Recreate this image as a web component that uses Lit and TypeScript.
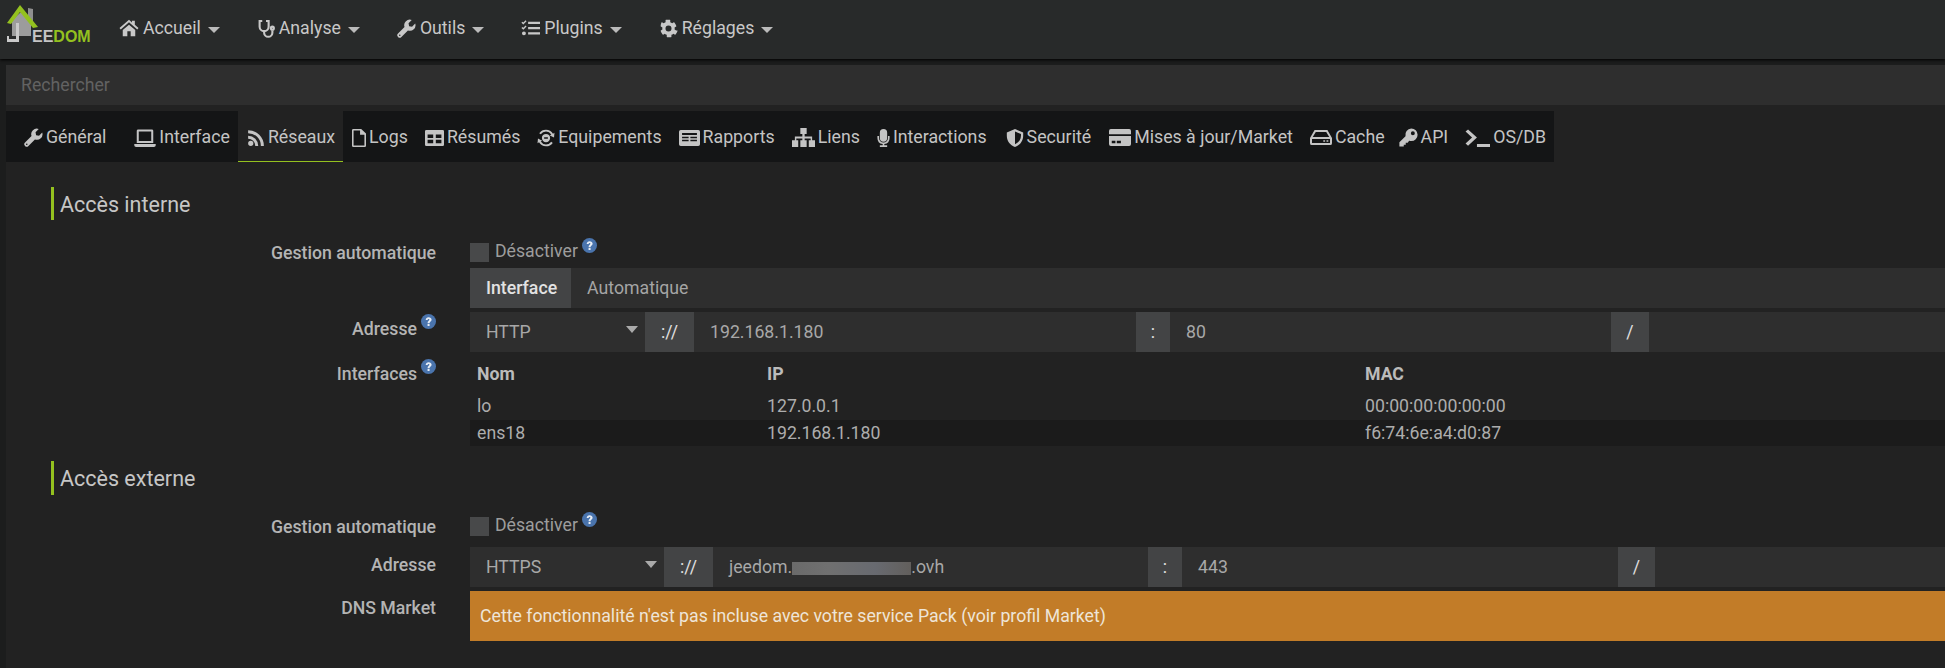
import { LitElement, html, css } from "lit";
import { customElement } from "lit/decorators.js";

const P = (vb: string, w: number, h: number, d: string) =>
  html`<svg class="i" style="width:${w}px;height:${h}px" viewBox=${vb} preserveAspectRatio="none" fill="currentColor" fill-rule="evenodd"><path d=${d}></path></svg>`;

const icons: Record<string, any> = {
  home: P("0 1 24 22", 20, 18, "M12 2 .6 12l1.500 1.700L12 5l9.900 8.700 1.500-1.700-4.400-3.900V3h-3.500v2.200zM4.500 14.500V22h5.500v-6h4v6h5.500v-7.500L12 8z"),
  steth: html`<svg class="i" style="width:18px;height:19px" viewBox="0 0 24 25" fill="none" stroke="currentColor" stroke-width="2.800"><path d="M7 2.500H3.500V10a6 6 0 0 0 12 0V2.500H12"></path><path d="M9.500 16v2a5.500 5.500 0 0 0 11 0v-3"></path><circle cx="20.500" cy="12" r="2"></circle></svg>`,
  wrench: P("0 0 24 24", 19, 19, "M23 5.700l-4 4-3.700-.7-.7-3.700 4-4a7 7 0 0 0-9.100 8.800L1.300 18.300a3 3 0 0 0 4.300 4.300l8.200-8.200a7 7 0 0 0 9.200-8.700zM3.500 21.500a1 1 0 1 1 0-2 1 1 0 0 1 0 2z"),
  tasks: P("0 0 24 24", 19, 18, "M9 3.500h15v3H9zM9 10.500h15v3H9zM9 17.500h15v3H9zM.5 5 1.800 3.700 2.900 4.800 5.800 1.800 7 3 3 7.200zM.5 12 1.800 10.700l1.100 1.100 2.900-3L7 10l-4 4.200zM3.700 16.500a2.500 2.500 0 1 1 0 5 2.500 2.500 0 0 1 0-5z"),
  cog: P("0 0 24 24", 19, 19, "M21.700 14.600l-2-1.200a8 8 0 0 0 0-2.800l2-1.200a.6.6 0 0 0 .2-.7 11.500 11.500 0 0 0-2.500-4.400.6.6 0 0 0-.7-.1l-2 1.200a8 8 0 0 0-2.500-1.400V1.600a.6.6 0 0 0-.4-.5 11.600 11.600 0 0 0-5.100 0 .6.6 0 0 0-.4.500V4a8 8 0 0 0-2.500 1.400l-2-1.200a.6.6 0 0 0-.7.100A11.500 11.500 0 0 0 2.100 8.700a.6.6 0 0 0 .2.7l2 1.200a8 8 0 0 0 0 2.800l-2 1.200a.6.6 0 0 0-.2.7 11.500 11.500 0 0 0 2.500 4.400.6.6 0 0 0 .7.1l2-1.200A8 8 0 0 0 9.800 20v2.400a.6.6 0 0 0 .4.500 11.600 11.600 0 0 0 5.100 0 .6.6 0 0 0 .4-.5V20a8 8 0 0 0 2.500-1.400l2 1.200a.6.6 0 0 0 .7-.1 11.500 11.500 0 0 0 2.500-4.400.6.6 0 0 0-.2-.7zM12 15.800a3.800 3.800 0 1 1 0-7.600 3.800 3.800 0 0 1 0 7.600z"),
  laptop: P("0 1 24 20", 22, 18, "M4.500 1.500h15A1.500 1.500 0 0 1 21 3v13.500H3V3a1.500 1.500 0 0 1 1.500-1.500zM5.200 3.700v10.600h13.600V3.700zM.3 17.800h23.400V19a2 2 0 0 1-2 2H2.300a2 2 0 0 1-2-2z"),
  rss: P("0 0 24 24", 18, 18, "M5 15.500a3.500 3.500 0 1 1 0 7 3.500 3.500 0 0 1 0-7zM1.500 9v4a9.500 9.500 0 0 1 9.500 9.500h4A13.500 13.500 0 0 0 1.500 9zM1.500 1.500v4a17 17 0 0 1 17 17h4a21 21 0 0 0-21-21z"),
  file: P("4 1 16 22", 14, 18, "M5.500 1h9L20 6.500v15a1.500 1.500 0 0 1-1.500 1.500h-13A1.500 1.500 0 0 1 4 21.500v-19A1.500 1.500 0 0 1 5.500 1zM5.800 2.800v18.400h12.400V8h-5V2.800z"),
  cells: P("1 3 22 18", 19, 16, "M2.500 3h19A1.500 1.500 0 0 1 23 4.500v15a1.500 1.500 0 0 1-1.500 1.500h-19A1.500 1.500 0 0 1 1 19.500v-15A1.500 1.500 0 0 1 2.500 3zM4 8v4h6.500V8zM13.500 8v4H20V8zM4 14v4h6.500v-4zM13.500 14v4H20v-4z"),
  equip: P("0 0 24 24", 18, 18, "M12 1a11 11 0 0 1 9.300 5.200l2-1.200-.6 6.300-5.600-2.800 1.900-1.100A8.600 8.600 0 0 0 12 3.400 8.600 8.600 0 0 0 5 7L3 5.500A11 11 0 0 1 12 1zM12 6.500a5.500 5.500 0 1 1 0 11 5.500 5.500 0 0 1 0-11zM9.500 11v2h5v-2zM2.700 17.800l-2 1.200.6-6.300 5.600 2.800-1.900 1.100A8.600 8.600 0 0 0 12 20.600 8.600 8.600 0 0 0 19 17l2 1.500A11 11 0 0 1 12 23a11 11 0 0 1-9.300-5.200z"),
  report: P("0 3 24 18", 21, 16, "M2 3h20a2 2 0 0 1 2 2v14a2 2 0 0 1-2 2H2a2 2 0 0 1-2-2V5a2 2 0 0 1 2-2zM3.500 6.500v2h17v-2zM3.500 10.500v1.700h7.500v-1.700zM13 10.500v1.700h7.500v-1.700zM3.500 14v1.700h7.500V14zM13 14v1.700h7.500V14z"),
  sitemap: P("0 1 24 21", 23, 19, "M8.700 1h6.600v6.500H13.200v3h7.800v4H24V22h-6.500v-7.500H19.500v-2H13.200v2h2.100V22H8.700v-7.500h2.100v-2H4.500v2h2V22H0v-7.500h3v-4h7.800v-3H8.700z"),
  mic: P("4 1 16 22", 13, 18, "M12 1a4.500 4.500 0 0 1 4.500 4.500v6.500a4.500 4.500 0 0 1-9 0V5.500A4.500 4.500 0 0 1 12 1zM4.500 9.500h2V12a5.500 5.500 0 0 0 11 0V9.500h2V12a7.500 7.500 0 0 1-6.500 7.400V21h3.500v2H7.500v-2H11v-1.600A7.500 7.500 0 0 1 4.500 12z"),
  shield: P("1 1 22 22", 18, 18, "M12 1l10 4.200v4c0 6.500-4 11.600-10 13.800C6 20.800 2 15.700 2 9.200v-4zM12 4.200v15.500c4.200-2 7.300-5.800 7.300-10.500V7z"),
  card: P("0 3 24 18", 22, 17, "M2 3h20a2 2 0 0 1 2 2v3.500H0V5a2 2 0 0 1 2-2zM0 10.500h24V19a2 2 0 0 1-2 2H2a2 2 0 0 1-2-2zM3 15.500V18h4v-2.500zM8.500 15.500V18h4.500v-2.500z"),
  hdd: P("0 4 24 16", 22, 15, "M5 4h14l5 8.500V18a2 2 0 0 1-2 2H2a2 2 0 0 1-2-2v-5.500zM6.300 6.200 3 11.500h18L17.700 6.200zM2.200 13.500v4.300h19.600v-4.300zM14.500 14.800h2v1.700h-2zM18 14.800h2v1.700h-2z"),
  key: P("0 0 24 24", 19, 19, "M15.500.5a8 8 0 0 1 0 16 8 8 0 0 1-2.700-.5L11 18.500H8.500V21H6v2.500H.5v-5.500l7.700-7.700A8 8 0 0 1 15.500.5zM17.500 4a2.500 2.500 0 1 0 0 5 2.500 2.500 0 0 0 0-5z"),
  term: P("1 1 23 21", 25, 18, "M1.500 4 3.800 1.500 12 11 3.800 20.500 1.500 18 7.500 11zM12 18.500h12V22H12z"),
};

const Q = html`<svg class="q" viewBox="0 0 24 24"><circle cx="12" cy="12" r="12" fill="#4a74ad"></circle><path d="M7.500 9.500C7.500 6.800 9.500 5 12.200 5S17 6.800 17 9.200c0 3-3.300 3.100-3.300 5.300h-3.200c0-3.500 3-3.600 3-5.200 0-.8-.6-1.300-1.400-1.300-1 0-1.500.7-1.500 1.700zM10.500 15.700h3.200V19h-3.200z" fill="#e8eef6"></path></svg>`;

@customElement("app-root")
export class AppRoot extends LitElement {
  static styles = css`
    :host { display: block; width: 1945px; height: 668px; overflow: hidden; background: #1c1d1d; font-family: Roboto, "Liberation Sans", sans-serif; font-size: 17.7px; line-height: 21px; color: #bdbdbd; }
    .i { flex: none; }
    .top { height: 59px; background: #282a2a; display: flex; align-items: center; box-shadow: 0 1px 3px #000; position: relative; }
    .logo { width: 119px; height: 59px; flex: none; position: relative; }
    .logo svg { display: block; }
    .logo span { position: absolute; left: 32px; top: 28px; font: 700 16px/18px "Liberation Sans", sans-serif; color: #c4c4c4; }
    .logo b { color: #94c11f; }
    .menu { display: flex; align-items: center; margin-top: -3px; color: #c8c8c8; }
    .mi { display: flex; align-items: center; gap: 4px; margin-right: 37px; }
    .caret { width: 0; height: 0; border-left: 6px solid transparent; border-right: 6px solid transparent; border-top: 6px solid #bbb; margin-left: 3px; margin-top: 3px; }
    .search { height: 40px; margin: 6px 0 0 6px; background: #2e2e2e; color: #626262; padding-left: 15px; display: flex; align-items: center; }
    .wrap { margin-left: 6px; background: #222; height: 563px; padding-top: 6px; box-sizing: border-box; }
    .tabs { display: inline-flex; height: 51px; background: #141516; color: #c4c4c4; align-items: stretch; vertical-align: top; font-size: 17.75px; }
    .tab { display: flex; align-items: center; gap: 3px; padding: 3px 8px 0 9px; box-sizing: border-box; border-bottom: 1px solid transparent; }
    .tab.t0 { padding-left: 18px; padding-right: 19px; }
    .tab.t2 { background: #222; border-bottom-color: #94c11f; }
    .tab.t8 { padding-right: 10px; }
    .tab.t9 { padding-right: 9px; }
    .tab.t11 { padding-right: 5px; }
    .sec { height: 33px; margin-left: 45px; border-left: 3px solid #94c11f; padding-left: 6px; display: flex; align-items: center; font-size: 21.5px; color: #c6c6c6; }
    .sec.a { margin-top: 25px; padding-top: 1px; height: 32px; }
    .sec.b { margin-top: 15px; height: 34px; }
    .row { display: grid; grid-template-columns: 430px 1fr; column-gap: 34px; margin-top: 4px; }
    .row.first-a { margin-top: 23px; }
    .row.first-b { margin-top: 22px; }
    .row.pillrow { margin-top: 3px; }
    .row.flush { margin-top: 0; }
    .row.addr2 { margin-top: 8px; }
    .lab { text-align: right; font-weight: 500; color: #b4b4b4; display: block; }
    .lab.l-addr { padding-top: 7px; }
    .addr2 .lab.l-addr { padding-top: 8px; }
    .lab.l-if { padding-top: 12px; }
    .q { width: 15px; height: 15px; vertical-align: 6px; margin: -10px 0 0 4px; }
    .chk { display: flex; align-items: flex-start; height: 22px; color: #9d9d9d; line-height: 17px; }
    .chk .q { margin-top: -5px; }
    .box { width: 19px; height: 19px; background: #48494a; margin-right: 6px; flex: none; }
    .pills { display: flex; background: #2e2e2e; height: 40px; color: #a5a5a5; align-items: stretch; }
    .pill { display: flex; align-items: center; padding: 0 16px; }
    .pill.on { background: #434445; color: #e2e2e2; font-weight: 500; padding-right: 14px; }
    .grp { display: flex; height: 40px; background: #2e2e2e; color: #a8a8a8; align-items: stretch; }
    .sel { display: flex; align-items: center; justify-content: space-between; padding: 0 7px 0 16px; box-sizing: border-box; flex: none; }
    .sel .caret { margin: -6px 0 0; border-left-width: 6.5px; border-right-width: 6.5px; border-top-width: 7px; border-top-color: #aaa; }
    .add { background: #434445; color: #e0e0e0; display: flex; align-items: center; justify-content: center; flex: none; }
    .inp { display: flex; align-items: center; padding-left: 16px; box-sizing: border-box; flex: none; white-space: pre; }
    .blur { display: inline-block; width: 119px; height: 13px; background: linear-gradient(90deg,#6a6a6a,#707070 30%,#686a70 70%,#625f5c); margin-top: 2px; }
    table { border-collapse: collapse; width: 100%; table-layout: fixed; color: #adadad; }
    th { text-align: left; font-weight: 700; color: #bbb; height: 41px; box-sizing: border-box; padding: 4px 0 0 7px; }
    td { height: 26px; padding: 0 0 0 7px; }
    tr.r1 td { height: 27px; }
    tr.odd td { background: #1b1b1b; }
    .alert { height: 50px; background: #c27c28; color: #eee5d8; display: flex; align-items: center; padding-left: 10px; }
  `;

  renderLogo() {
    return html`<div class="logo">
      <svg width="119" height="59" viewBox="0 0 119 59">
        <path d="M28 8l5 1v14h-5z" fill="#8f8f8f"></path>
        <path d="M12 20 21 12 31 22v14H12z" fill="#9c9c9c"></path>
        <path d="M7 23 20 5 38 27l-5 1L20 12 11 24z" fill="#94c11f"></path>
        <path d="M16 23h3v19H7v-6h2v3h7z" fill="#c9c9c9"></path>
      </svg>
      <span>EE<b>DOM</b></span>
    </div>`;
  }

  address(selW: number, proto: string, val: any, inW: number, port: string, portW: number, slashW: number) {
    return html`<div class="grp">
      <div class="sel" style="width:${selW}px">${proto}<span class="caret"></span></div>
      <div class="add" style="width:49px">://</div>
      <div class="inp" style="width:${inW}px">${val}</div>
      <div class="add" style="width:34px">:</div>
      <div class="inp" style="width:${portW}px">${port}</div>
      <div class="add" style="width:${slashW}px">/</div>
    </div>`;
  }

  render() {
    const nav: [string, string][] = [["home","Accueil"],["steth","Analyse"],["wrench","Outils"],["tasks","Plugins"],["cog","Réglages"]];
    const tabs: [string, string][] = [["wrench","Général"],["laptop","Interface"],["rss","Réseaux"],["file","Logs"],["cells","Résumés"],["equip","Equipements"],["report","Rapports"],["sitemap","Liens"],["mic","Interactions"],["shield","Securité"],["card","Mises à jour/Market"],["hdd","Cache"],["key","API"],["term","OS/DB"]];
    return html`
      <div class="top">
        ${this.renderLogo()}
        <div class="menu">
          ${nav.map(([i, t]) => html`<div class="mi">${icons[i]}<span>${t}</span><span class="caret"></span></div>`)}
        </div>
      </div>
      <div class="search">Rechercher</div>
      <div class="wrap">
        <div class="tabs">
          ${tabs.map(([i, t], n) => html`<div class="tab t${n}">${icons[i]}<span>${t}</span></div>`)}
        </div>
        <div class="sec a">Accès interne</div>
        <div class="row first-a">
          <div class="lab">Gestion automatique</div>
          <div class="chk"><span class="box"></span>Désactiver${Q}</div>
        </div>
        <div class="row pillrow">
          <div></div>
          <div class="pills"><div class="pill on">Interface</div><div class="pill">Automatique</div></div>
        </div>
        <div class="row">
          <div class="lab l-addr">Adresse${Q}</div>
          ${this.address(175, "HTTP", "192.168.1.180", 442, "80", 441, 38)}
        </div>
        <div class="row flush">
          <div class="lab l-if">Interfaces${Q}</div>
          <table>
            <colgroup><col style="width:290px"><col style="width:598px"><col></colgroup>
            <tr><th>Nom</th><th>IP</th><th>MAC</th></tr>
            <tr class="r1"><td>lo</td><td>127.0.0.1</td><td>00:00:00:00:00:00</td></tr>
            <tr class="odd"><td>ens18</td><td>192.168.1.180</td><td>f6:74:6e:a4:d0:87</td></tr>
          </table>
        </div>
        <div class="sec b">Accès externe</div>
        <div class="row first-b">
          <div class="lab">Gestion automatique</div>
          <div class="chk"><span class="box"></span>Désactiver${Q}</div>
        </div>
        <div class="row addr2">
          <div class="lab l-addr">Adresse</div>
          ${this.address(194, "HTTPS", html`jeedom.<span class="blur"></span>.ovh`, 435, "443", 436, 37)}
        </div>
        <div class="row">
          <div class="lab l-addr">DNS Market</div>
          <div class="alert">Cette fonctionnalité n'est pas incluse avec votre service Pack (voir profil Market)</div>
        </div>
      </div>
    `;
  }
}
